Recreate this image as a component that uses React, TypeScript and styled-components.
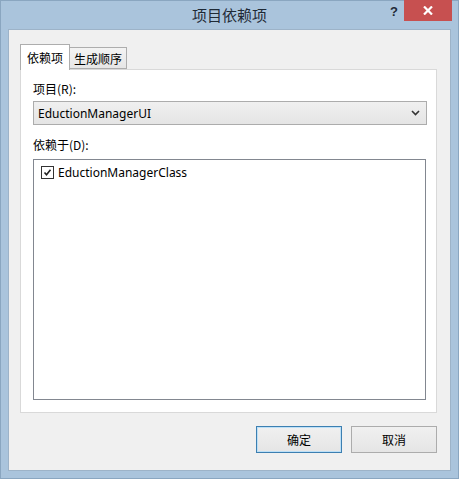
import React from "react";
import styled, { createGlobalStyle } from "styled-components";

const Global = createGlobalStyle`
  html, body { margin: 0; padding: 0; }
  body { width: 459px; height: 479px; overflow: hidden; font-family: "Noto Sans", "Noto Sans CJK SC", sans-serif; }
`;

const Window = styled.div`
  width: 459px;
  height: 479px;
  box-sizing: border-box;
  background: #aac4dc;
  border: 1px solid #8aa6c0;
  display: flex;
  flex-direction: column;
`;

const TitleBar = styled.div`
  height: 29px;
  display: flex;
  align-items: flex-start;
  position: relative;
`;

const Title = styled.div`
  position: absolute;
  left: 0;
  right: 0;
  top: 4px;
  text-align: center;
  font-family: "Noto Sans CJK SC", sans-serif;
  font-size: 15px;
  color: #1f2a36;
  line-height: 20px;
`;

const Help = styled.div`
  position: absolute;
  right: 60px;
  top: 3px;
  font-family: "Liberation Sans", sans-serif;
  font-weight: bold;
  font-size: 13px;
  color: #1f2a36;
`;

const Close = styled.div`
  position: absolute;
  right: 6px;
  top: -1px;
  width: 48px;
  height: 21px;
  background: #c75050;
  display: flex;
  align-items: center;
  justify-content: center;
`;

const Client = styled.div`
  flex: 1;
  margin: 0 7px 7px 7px;
  background: #f0f0f0;
  border: 1px solid #9db3c8;
  padding: 15px 13px 17px 11px;
  display: flex;
  flex-direction: column;
`;

const Tabs = styled.div`
  display: flex;
  align-items: flex-end;
  height: 24px;
  position: relative;
  z-index: 1;
`;

const Tab = styled.div<{ $active?: boolean }>`
  box-sizing: border-box;
  height: ${(p) => (p.$active ? 26 : 22)}px;
  margin-bottom: ${(p) => (p.$active ? -1 : 0)}px;
  padding: 0 ${(p) => (p.$active ? 6 : 4)}px;
  background: ${(p) => (p.$active ? "#ffffff" : "linear-gradient(#f3f3f3, #e6e6e6)")};
  border: 1px solid #adadad;
  border-bottom: ${(p) => (p.$active ? "none" : "1px solid #adadad")};
  margin-left: ${(p) => (p.$active ? 0 : -1)}px;
  font-family: "Noto Sans CJK SC", sans-serif;
  font-size: 12px;
  color: #000;
  display: flex;
  align-items: center;
  padding-top: ${(p) => (p.$active ? 0 : 1)}px;
`;

const Panel = styled.div`
  height: 344px;
  box-sizing: border-box;
  background: #ffffff;
  border: 1px solid #d9d9d9;
  padding: 9px 9px 12px 12px;
  display: flex;
  flex-direction: column;
`;

const Label = styled.div`
  font-family: "Noto Sans CJK SC", sans-serif;
  font-size: 12px;
  line-height: 20px;
  color: #000;
  height: 20px;
`;

const Combo = styled.div`
  margin-top: 2px;
  height: 24px;
  box-sizing: border-box;
  border: 1px solid #acacac;
  background: linear-gradient(#f0f0f0, #e5e5e5);
  display: flex;
  align-items: center;
  justify-content: space-between;
  padding: 0 6px 0 4px;
  font-family: "Noto Sans", sans-serif;
  font-size: 12px;
  color: #000;
  margin-bottom: 10px;
`;

const ListBox = styled.div`
  margin-top: 4px;
  flex: 1;
  margin-right: 1px;
  border: 1px solid #828790;
  background: #fff;
  padding: 4px 7px;
`;

const Item = styled.div`
  display: flex;
  align-items: center;
  gap: 4px;
  font-family: "Noto Sans", sans-serif;
  font-size: 12px;
  height: 17px;
  color: #000;
`;

const Check = styled.div`
  width: 11px;
  height: 11px;
  border: 1px solid #333;
  background: #fff;
  display: flex;
  align-items: center;
  justify-content: center;
`;

const Footer = styled.div`
  margin-top: 13px;
  display: flex;
  justify-content: flex-end;
  gap: 9px;
`;

const Button = styled.div<{ $default?: boolean }>`
  width: 86px;
  height: 27px;
  box-sizing: border-box;
  border: 1px solid ${(p) => (p.$default ? "#3c7fb1" : "#acacac")};
  box-shadow: ${(p) => (p.$default ? "inset 0 0 0 1px #bde0f7" : "none")};
  background: linear-gradient(#f0f0f0, #e5e5e5);
  display: flex;
  align-items: center;
  justify-content: center;
  font-family: "Noto Sans CJK SC", sans-serif;
  font-size: 12px;
  color: #000;
`;

export default function App() {
  return (
    <>
      <Global />
      <Window>
        <TitleBar>
          <Title>项目依赖项</Title>
          <Help>?</Help>
          <Close>
            <svg width="10" height="9" viewBox="0 0 10 9">
              <path d="M1 0.5 L9 8.5 M9 0.5 L1 8.5" stroke="#fff" strokeWidth="2.2" />
            </svg>
          </Close>
        </TitleBar>
        <Client>
          <Tabs>
            <Tab $active>依赖项</Tab>
            <Tab>生成顺序</Tab>
          </Tabs>
          <Panel>
            <Label>项目(R):</Label>
            <Combo>
              <span>EductionManagerUI</span>
              <svg width="9" height="6" viewBox="0 0 9 6">
                <path d="M1 1 L4.5 4.5 L8 1" stroke="#333" strokeWidth="1.6" fill="none" />
              </svg>
            </Combo>
            <Label>依赖于(D):</Label>
            <ListBox>
              <Item>
                <Check>
                  <svg width="9" height="9" viewBox="0 0 9 9">
                    <path d="M1.5 4.5 L3.5 6.8 L7.5 1.8" stroke="#222" strokeWidth="1.6" fill="none" />
                  </svg>
                </Check>
                EductionManagerClass
              </Item>
            </ListBox>
          </Panel>
          <Footer>
            <Button $default>确定</Button>
            <Button>取消</Button>
          </Footer>
        </Client>
      </Window>
    </>
  );
}
